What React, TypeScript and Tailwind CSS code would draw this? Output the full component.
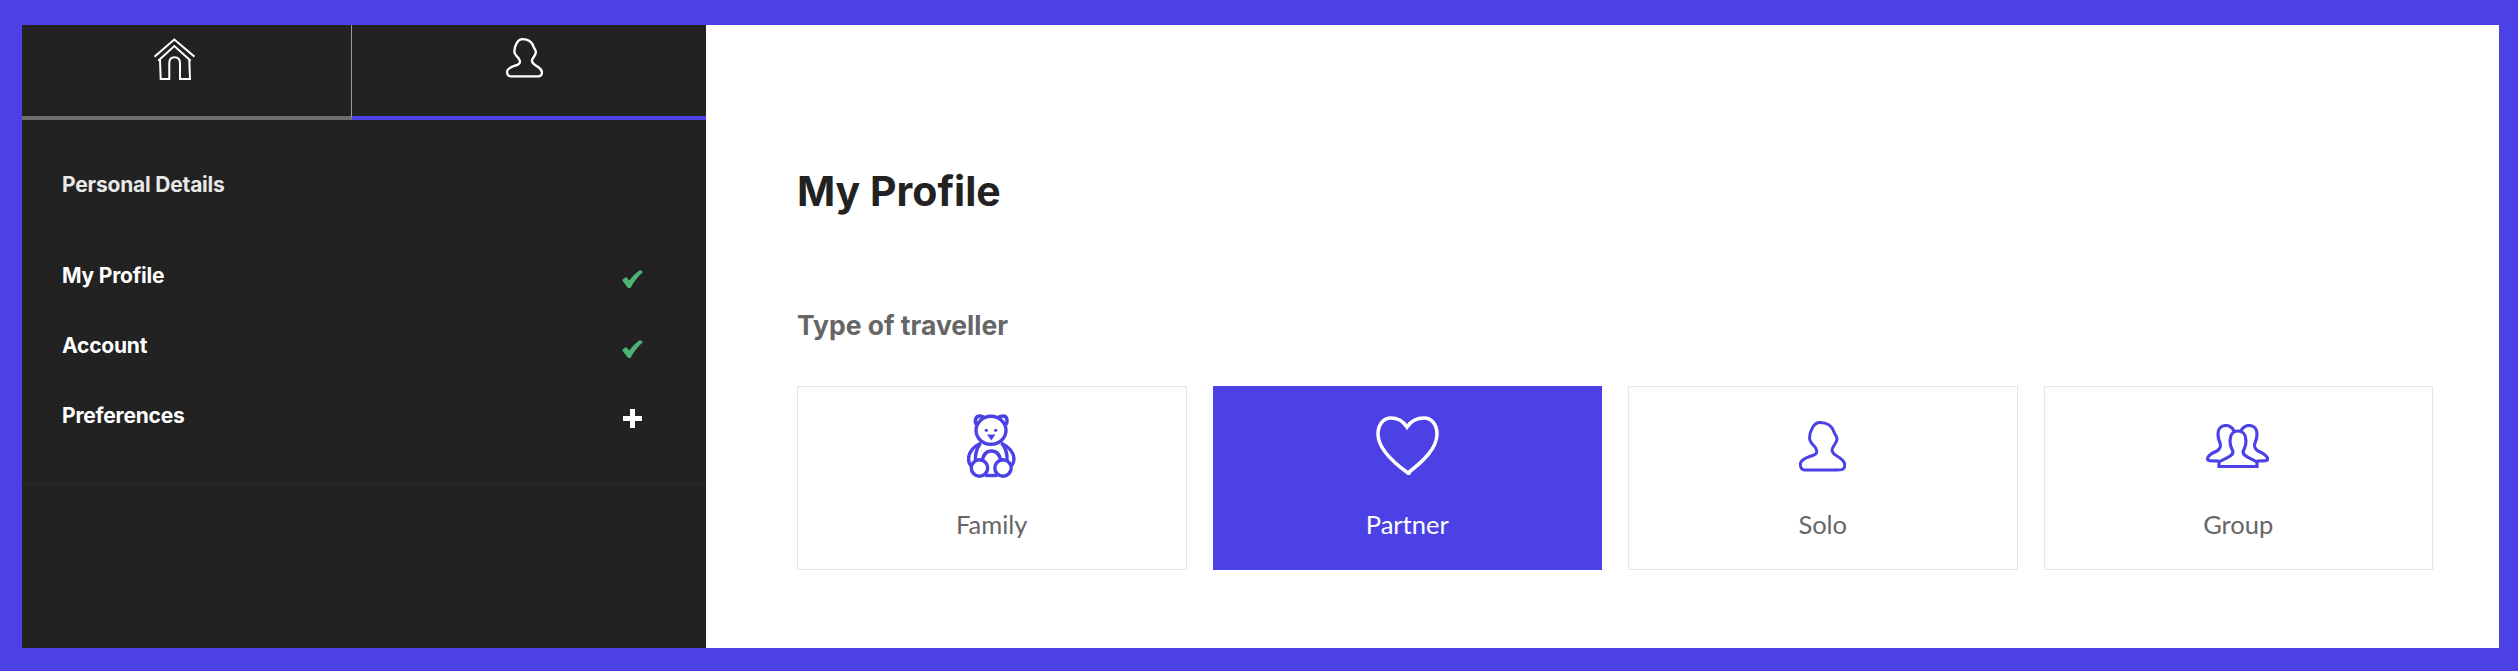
import type { ReactNode } from "react";

const PERSON =
  "M21 1.5C28 1.5 33 5 35 11C36 14 38 15 38 18C38 23 33 25 33 29C33 33 37 34 41 37C45 40 46.5 43 45.5 46C44.5 49 42 49 38 49L6 49C2 49 1 45 1.5 42C3 37 10 36 15 34C19 32 18 29 16 26C13 23 10.5 20 10.5 17C11 9 15 1.5 21 1.5Z";

function HouseIcon() {
  return (
    <svg width="41" height="42" viewBox="0 0 41 42" fill="none" stroke="#fff" strokeWidth="2">
      <path d="M0.5 18.7L20.3 1.5L40.5 18.7" />
      <path d="M4.3 22.7L20.3 8L36.7 22.7" />
      <path d="M6 22L6.7 41H15.3V25C15.3 21 17.5 19.3 20.5 19.3C23.5 19.3 26 21 26 25V41H36L35.3 22" />
    </svg>
  );
}

function PersonIcon({ className, stroke, strokeWidth }: { className: string; stroke: string; strokeWidth: string }) {
  return (
    <svg className={className} viewBox="0 0 47 51" fill="none" stroke={stroke} strokeWidth={strokeWidth}>
      <path d={PERSON} />
    </svg>
  );
}

function BearIcon() {
  return (
    <svg width="49" height="64" viewBox="0 0 49 64" fill="none" stroke="#4b41e5" strokeWidth="3.4">
      <path d="M10.5 11C7 9.5 7.5 2 13 2C16 2 17.5 3.5 18 4" />
      <path d="M38 11C41 9.5 41 2 36 2C33 2 31 3.5 30.5 4" />
      <ellipse cx="24" cy="16.3" rx="15" ry="14" />
      <circle cx="19.3" cy="16.3" r="1.6" fill="#4b41e5" stroke="none" />
      <circle cx="28.7" cy="16.3" r="1.6" fill="#4b41e5" stroke="none" />
      <path d="M20 20.5H28.5L24.3 26.5Z" fill="#4b41e5" stroke="none" />
      <path d="M14 29C6 33 1.5 39 1.5 45C1.5 48 2.5 50 4 52" />
      <path d="M34 29C42 33 47 39 47 45C47 48 46 50 44.5 52" />
      <path d="M13 30C9.5 35 8 41 8.5 47" />
      <path d="M35.5 30C39 35 40.5 41 40 47" />
      <path d="M15 48C16 41 19 37 24.5 37C30 37 33 41 34 48" />
      <circle cx="12.5" cy="54" r="8.2" />
      <circle cx="36" cy="54" r="8.2" />
      <path d="M18 61.5H30.5" />
    </svg>
  );
}

function HeartIcon() {
  return (
    <svg width="63" height="60" viewBox="0 0 63 60" fill="none" stroke="#fff" strokeWidth="3.5">
      <path d="M31 11C27 5 21 2 15 2C7 2 2 9 2 18C2 33 18 47 32 57C46 46 61 33 61 18C61 9 56 2 48 2C41 2 35 5 31 11Z" />
      <circle cx="33" cy="57" r="2" fill="#fff" stroke="none" />
    </svg>
  );
}

function GroupIcon() {
  return (
    <svg width="64" height="44" viewBox="0 0 64 44" fill="none" stroke="#4b41e5" strokeWidth="3.2">
      <path d="M13 42.5V38C20 34 27 32 27 28C27 26 24 24 24 17C24 11 27 7 32 7C37 7 40 11 40 17C40 24 37 26 37 28C37 32 44 34 51 38V42.5Z" />
      <path d="M28 7C26 3 23 1.5 20 1.5C15 1.5 12 5 12 10C12 15 13 17 14 19C15 22 15 24 11 27C7 29 1.5 31 1.5 35C1.5 37 4 37 13 37" />
      <path d="M35 7C37 3 40 1.5 43 1.5C48 1.5 51 5 51 10C51 15 50 17 49 19C48 22 48 24 52 27C56 29 61.5 31 61.5 35C61.5 37 59 37 51 37" />
    </svg>
  );
}

function CheckIcon() {
  return (
    <svg width="21" height="18" viewBox="0 0 21 18" fill="#4db476">
      <path d="M0 10L4 7L7.5 10.5C10 6.5 14 2.5 18 0L21 2C16 6.5 11.5 12 8.5 18H6Z" />
    </svg>
  );
}

function PlusIcon() {
  return (
    <svg width="19" height="19" viewBox="0 0 19 19" fill="#fff">
      <path d="M7 0H12V7H19V12H12V19H7V12H0V7H7Z" />
    </svg>
  );
}

function MenuRow({ label, icon }: { label: string; icon: ReactNode }) {
  return (
    <div className="flex h-[70px] items-center justify-between">
      <span className="font-['Inter',sans-serif] text-[21px] font-bold tracking-[-0.2px] text-white">{label}</span>
      <span className="mt-[5px] flex w-[21px] justify-center">{icon}</span>
    </div>
  );
}

function TravellerCard({ label, icon, active }: { label: string; icon: ReactNode; active?: boolean }) {
  return (
    <div
      className={
        active
          ? "flex h-[184px] flex-col items-center border border-[#4b41e5] bg-[#4b41e5]"
          : "flex h-[184px] flex-col items-center border border-[#e5e5e5] bg-white"
      }
    >
      <div className="mt-[19px] flex h-[80px] items-center justify-center">{icon}</div>
      <span className={active ? "mt-[22px] text-[25.5px] leading-[32px] text-white" : "mt-[22px] text-[25.5px] leading-[32px] text-[#666666]"}>
        {label}
      </span>
    </div>
  );
}

export default function App() {
  return (
    <div className="flex h-screen w-full bg-[#4b41e5] pb-[23px] pl-[22px] pr-[19px] pt-[25px] font-['Lato',sans-serif]">
      <aside className="flex w-[684px] shrink-0 flex-col bg-[#222222]">
        <div className="flex h-[95px]">
          <div className="flex w-[330px] justify-center border-b-4 border-r border-b-[#6e6e6e] border-r-[#9a9a9a] pr-[25px] pt-[13px]">
            <div><HouseIcon /></div>
          </div>
          <div className="flex flex-1 justify-center border-b-4 border-b-[#4b41e5] pr-[9px] pt-[13px]">
            <div><PersonIcon className="h-[40px] w-[37px]" stroke="#fff" strokeWidth="3" /></div>
          </div>
        </div>
        <div className="border-b border-[#2c2c2c] pb-[32px] pl-[40px] pr-[63px] pt-[50px]">
          <h3 className="mb-[41px] h-[30px] font-['Inter',sans-serif] text-[21px] font-bold leading-[30px] tracking-[-0.2px] text-[#e8e8e8]">Personal Details</h3>
          <MenuRow label="My Profile" icon={<CheckIcon />} />
          <MenuRow label="Account" icon={<CheckIcon />} />
          <MenuRow label="Preferences" icon={<PlusIcon />} />
        </div>
      </aside>
      <main className="flex-1 bg-white pl-[91px] pr-[66px] pt-[136px]">
        <h1 className="h-[60px] font-['Inter',sans-serif] text-[41px] font-bold leading-[60px] text-[#222222]">My Profile</h1>
        <h2 className="mt-[84px] h-[40px] font-['Inter',sans-serif] text-[26.5px] font-bold leading-[40px] text-[#666666]">Type of traveller</h2>
        <div className="mt-[41px] grid grid-cols-4 gap-[26px]">
          <TravellerCard label="Family" icon={<BearIcon />} />
          <TravellerCard label="Partner" icon={<HeartIcon />} active />
          <TravellerCard label="Solo" icon={<PersonIcon className="h-[51px] w-[47px]" stroke="#4b41e5" strokeWidth="3" />} />
          <TravellerCard label="Group" icon={<GroupIcon />} />
        </div>
      </main>
    </div>
  );
}
